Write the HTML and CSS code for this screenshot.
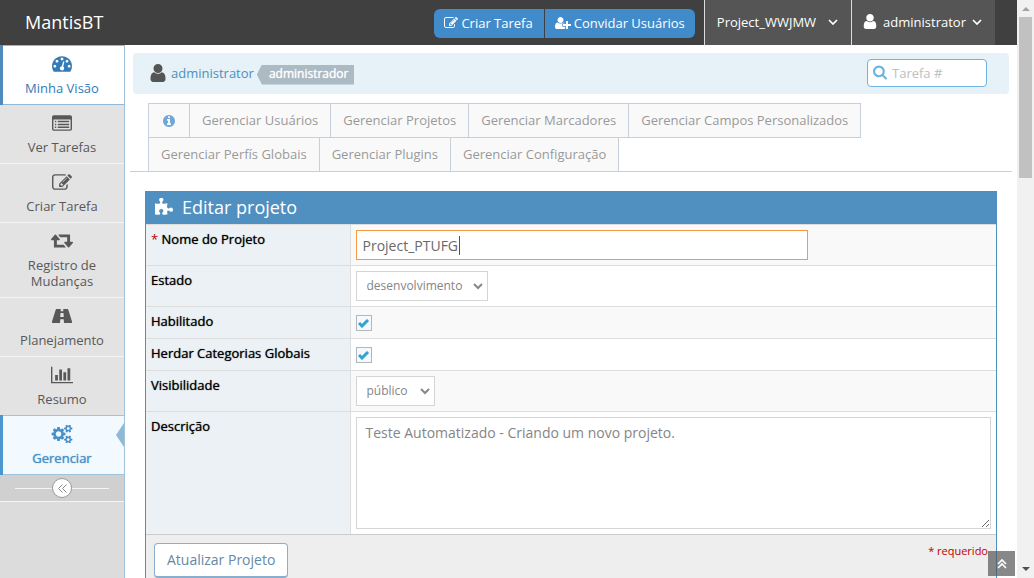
FILE: index.html
```html
<!DOCTYPE html>
<html lang="pt-BR">
<head>
<meta charset="utf-8">
<title>Editar projeto - MantisBT</title>
<link rel="stylesheet" href="styles.css">
</head>
<body>
<svg class="sprite" aria-hidden="true">
  <symbol id="user" viewBox="192 128 1408 1536"><path d="M1536 1399q0 109-62.5 187t-150.5 78h-854q-88 0-150.5-78t-62.5-187q0-85 8.5-160.5t31.5-152 58.5-131 94-89 134.5-34.5q131 128 313 128t313-128q76 0 134.5 34.5t94 89 58.5 131 31.5 152 8.5 160.5zm-256-887q0 159-112.5 271.5t-271.5 112.5-271.5-112.5-112.5-271.5 112.5-271.5 271.5-112.5 271.5 112.5 112.5 271.5z"/></symbol>
  <symbol id="edit" viewBox="0 128 1792 1408"><path d="M888 1184l116-116-152-152-116 116v56h96v96h56zm440-720q-16-16-33 1l-350 350q-17 17-1 33t33-1l350-350q17-17 1-33zm80 594v190q0 119-84.500 203.500t-203.500 84.500h-832q-119 0-203.500-84.500t-84.500-203.500v-832q0-119 84.500-203.500t203.500-84.500h832q63 0 117 25 15 7 18 23 3 17-9 29l-49 49q-14 14-32 8-23-6-45-6h-832q-66 0-113 47t-47 113v832q0 66 47 113t113 47h832q66 0 113-47t47-113v-126q0-13 9-22l64-64q15-15 35-7t20 29zm-96-738l288 288-672 672h-288v-288zm444 132l-92 92-288-288 92-92q28-28 68-28t68 28l152 152q28 28 28 68t-28 68z"/></symbol>
  <symbol id="user-plus" viewBox="0 128 2048 1536"><path d="M704 896q-159 0-271.5-112.5t-112.5-271.5 112.5-271.5 271.5-112.5 271.5 112.5 112.5 271.5-112.5 271.5-271.5 112.5zm960 128h352q13 0 22.5 9.5t9.5 22.5v192q0 13-9.5 22.5t-22.5 9.5h-352v352q0 13-9.5 22.5t-22.5 9.5h-192q-13 0-22.5-9.5t-9.5-22.5v-352h-352q-13 0-22.5-9.5t-9.5-22.5v-192q0-13 9.5-22.5t22.5-9.5h352v-352q0-13 9.5-22.5t22.5-9.5h192q13 0 22.5 9.5t9.5 22.5v352zm-736 224q0 52 38 90t90 38h256v238q-68 50-171 50h-874q-121 0-194-69t-73-190q0-53 3.5-103.5t14-109 26.5-108.5 43-97.5 62-81 85.5-53.5 111.5-20q19 0 39 17 79 61 154.5 91.5t164.5 30.5 164.5-30.5 154.5-91.5q20-17 39-17 132 0 217 96h-223q-52 0-90 38t-38 90v192z"/></symbol>
  <symbol id="search" viewBox="64 128 1664 1664"><path d="M1216 832q0-185-131.5-316.5t-316.5-131.5-316.5 131.5-131.5 316.5 131.5 316.5 316.5 131.5 316.5-131.5 131.5-316.5zm512 832q0 52-38 90t-90 38q-54 0-90-38l-343-342q-179 124-399 124-143 0-273.5-55.5t-225-150-150-225-55.5-273.5 55.5-273.5 150-225 225-150 273.5-55.5 273.5 55.5 225 150 150 225 55.5 273.5q0 220-124 399l343 343q37 37 37 90z"/></symbol>
  <symbol id="info" viewBox="128 128 1536 1536"><path d="M1152 1376v-160q0-14-9-23t-23-9h-96v-512q0-14-9-23t-23-9h-320q-14 0-23 9t-9 23v160q0 14 9 23t23 9h96v320h-96q-14 0-23 9t-9 23v160q0 14 9 23t23 9h448q14 0 23-9t9-23zm-128-896v-160q0-14-9-23t-23-9h-192q-14 0-23 9t-9 23v160q0 14 9 23t23 9h192q14 0 23-9t9-23zm640 416q0 209-103 385.5t-279.5 279.5-385.5 103-385.5-103-279.5-279.5-103-385.5 103-385.5 279.5-279.5 385.5-103 385.5 103 279.5 279.5 103 385.5z"/></symbol>
  <symbol id="gauge" viewBox="0 256 1792 1408"><path d="M384 1152q0-53-37.5-90.5t-90.5-37.5-90.5 37.5-37.5 90.5 37.5 90.5 90.5 37.5 90.5-37.5 37.5-90.5zm192-448q0-53-37.5-90.5t-90.5-37.5-90.5 37.5-37.5 90.5 37.5 90.5 90.5 37.5 90.5-37.5 37.5-90.5zm428 481l101-382q6-26-7.5-48.5t-38.5-29.5-48 6.5-30 39.5l-101 382q-60 5-107 43.5t-63 98.5q-20 77 20 146t117 89 146-20 89-117q16-60-6-117t-72-91zm660-33q0-53-37.5-90.5t-90.5-37.5-90.5 37.5-37.5 90.5 37.5 90.5 90.5 37.5 90.5-37.5 37.5-90.5zm-640-640q0-53-37.5-90.5t-90.5-37.5-90.5 37.5-37.5 90.5 37.5 90.5 90.5 37.5 90.5-37.5 37.5-90.5zm448 192q0-53-37.5-90.5t-90.5-37.5-90.5 37.5-37.5 90.5 37.5 90.5 90.5 37.5 90.5-37.5 37.5-90.5zm320 448q0 261-141 483-19 29-54 29h-1402q-35 0-54-29-141-221-141-483 0-182 71-348t191-286 286-191 348-71 348 71 286 191 191 286 71 348z"/></symbol>
  <symbol id="list" viewBox="0 128 1792 1408"><path fill-rule="evenodd" d="M160 128H1632Q1792 128 1792 288V1376Q1792 1536 1632 1536H160Q0 1536 0 1376V288Q0 128 160 128zM160 512Q128 512 128 544V1376Q128 1408 160 1408H1632Q1664 1408 1664 1376V544Q1664 512 1632 512zM256 640H384V768H256zM256 896H384V1024H256zM256 1152H384V1280H256zM512 640H1536V768H512zM512 896H1536V1024H512zM512 1152H1536V1280H512z"/></symbol>
  <symbol id="retweet" viewBox="0 384 1920 1152"><path d="M1280 1504q0 13-9.500 22.500t-22.500 9.500h-960q-8 0-13.500-2t-9-7-5.500-8-3-11.500-1-11.500v-600h-192q-26 0-45-19t-19-45q0-24 15-41l320-384q19-22 49-22t49 22l320 384q15 17 15 41 0 26-19 45t-45 19h-192v384h576q16 0 25 11l160 192q7 10 7 21zm640-416q0 24-15 41l-320 384q-20 23-49 23t-49-23l-320-384q-15-17-15-41 0-26 19-45t45-19h192v-384h-576q-16 0-25-12l-160-192q-7-9-7-20 0-13 9.500-22.500t22.500-9.500h960q8 0 13.500 2t9 7 5.500 8 3 11.500 1 11.500v600h192q26 0 45 19t19 45z"/></symbol>
  <symbol id="road" viewBox="0 0 20 14"><path fill-rule="evenodd" d="M4.600 0H8.800L8.600 2.200H11.400L11.200 0H15.400Q16 0 16.300.7L20 12.600Q20.200 14 19.300 14H12L11.700 10.200H8.300L8 14H.7Q-.2 14 0 12.600L3.700.7Q4 0 4.600 0zM8.500 4L8.200 8H11.800L11.500 4z"/></symbol>
  <symbol id="chart" viewBox="0 128 2048 1536"><path d="M640 896v512h-256v-512h256zm384-512v1024h-256v-1024h256zm1024 1152v128h-2048v-1536h128v1408h1920zm-640-896v768h-256v-768h256zm384-384v1152h-256v-1152h256z"/></symbol>
  <symbol id="cogs" viewBox="0 64 1920 1664"><path d="M896 896q0-106-75-181t-181-75-181 75-75 181 75 181 181 75 181-75 75-181zm768 512q0-52-38-90t-90-38-90 38-38 90q0 53 37.5 90.5t90.5 37.5 90.5-37.5 37.5-90.5zm0-1024q0-52-38-90t-90-38-90 38-38 90q0 53 37.5 90.5t90.5 37.5 90.5-37.5 37.5-90.5zm-384 421v185q0 10-7 19.500t-16 10.500l-155 24q-11 35-32 76 34 48 90 115 7 11 7 20 0 12-7 19-23 30-82.500 89.500t-78.500 59.500q-11 0-21-7l-115-90q-37 19-77 31-11 108-23 155-7 24-30 24h-186q-11 0-20-7.500t-10-17.500l-23-153q-34-10-75-31l-118 89q-7 7-20 7-11 0-21-8-144-133-144-160 0-9 7-19 10-14 41-53t47-61q-23-44-35-82l-152-24q-10-1-17-9.500t-7-19.500v-185q0-10 7-19.500t16-10.500l155-24q11-35 32-76-34-48-90-115-7-11-7-20 0-12 7-20 22-30 82-89t79-59q11 0 21 7l115 90q34-18 77-32 11-108 23-154 7-24 30-24h186q11 0 20 7.500t10 17.500l23 153q34 10 75 31l118-89q8-7 20-7 11 0 21 8 144 133 144 160 0 8-7 19-12 16-42 54t-45 60q23 48 34 82l152 23q10 2 17 10.500t7 19.500zm640 533v140q0 16-149 31-12 27-30 52 51 113 51 138 0 4-4 7-122 71-124 71-8 0-46-47t-52-68q-20 2-30 2t-30-2q-14 21-52 68t-46 47q-2 0-124-71-4-3-4-7 0-25 51-138-18-25-30-52-149-15-149-31v-140q0-16 149-31 13-29 30-52-51-113-51-138 0-4 4-7 4-2 35-20t59-34 30-16q8 0 46 46.500t52 67.500q20-2 30-2t30 2q51-71 92-112l6-2q4 0 124 70 4 3 4 7 0 25-51 138 17 23 30 52 149 15 149 31zm0-1024v140q0 16-149 31-12 27-30 52 51 113 51 138 0 4-4 7-122 71-124 71-8 0-46-47t-52-68q-20 2-30 2t-30-2q-14 21-52 68t-46 47q-2 0-124-71-4-3-4-7 0-25 51-138-18-25-30-52-149-15-149-31v-140q0-16 149-31 13-29 30-52-51-113-51-138 0-4 4-7 4-2 35-20t59-34 30-16q8 0 46 46.500t52 67.500q20-2 30-2t30 2q51-71 92-112l6-2q4 0 124 70 4 3 4 7 0 25-51 138 17 23 30 52 149 15 149 31z"/></symbol>
  <symbol id="puzzle" viewBox="91 0 1664 1664"><path d="M1755 1082q0 81-44.500 135t-123.500 54q-41 0-77.500-17.500t-59-38-56.500-38-71-17.500q-110 0-110 124 0 39 16 115t15 115v5q-22 0-33 1-34 3-97.500 11.500t-115.500 13.500-98 5q-61 0-103-26.500t-42-83.500q0-37 17.500-71t38-56.500 38-59 17.500-77.500q0-79-54-123.500t-135-44.500q-84 0-143 45.500t-59 127.500q0 43 15 83t33.500 64.500 33.500 53 15 50.500q0 45-46 89-37 35-117 35-95 0-245-24-9-2-27.500-4t-27.500-4l-13-2q-1 0-3-1-2 0-2-1v-1024q2 1 17.500 3.500t34 5 21.500 3.500q150 24 245 24 80 0 117-35 46-44 46-89 0-22-15-50.500t-33.500-53-33.500-64.500-15-83q0-82 59-127.500t144-45.500q80 0 134 44.500t54 123.500q0 41-17.500 77.500t-38 59-38 56.500-17.500 71q0 57 42 83.500t103 26.500q64 0 180-15t163-17v2q-1 2-3.500 17.500t-5 34-3.500 21.500q-24 150-24 245 0 80 35 117 44 46 89 46 22 0 50.500-15t53-33.500 64.500-33.500 83-15q82 0 127.500 59t45.500 143z"/></symbol>
  <symbol id="angle" viewBox="0 0 10 6"><path d="M1 1l4 4 4-4" fill="none" stroke="currentColor" stroke-width="1.700"/></symbol>
  <symbol id="double-left" viewBox="0 0 9 9"><path d="M4.500.5l-4 4 4 4M8.500.5l-4 4 4 4" fill="none" stroke="currentColor"/></symbol>
  <symbol id="double-up" viewBox="0 0 10 10"><path d="M1 5l4-4 4 4M1 9l4-4 4 4" fill="none" stroke="currentColor" stroke-width="1.700"/></symbol>
</svg>
<div class="window">
<div class="page">
  <header class="navbar">
    <a class="brand" href="#">MantisBT</a>
    <div class="nav-buttons">
      <a class="nav-button" href="#"><svg class="i14"><use href="#edit"/></svg>Criar Tarefa</a>
      <a class="nav-button" href="#"><svg class="i16"><use href="#user-plus"/></svg>Convidar Usuários</a>
    </div>
    <button class="nav-menu project-menu" type="button">Project_WWJMW<svg class="angle"><use href="#angle"/></svg></button>
    <button class="nav-menu user-menu" type="button"><svg class="i14"><use href="#user"/></svg>administrator<svg class="angle"><use href="#angle"/></svg></button>
  </header>
  <div class="body">
    <nav class="sidebar">
      <a class="side-item hovered" href="#"><svg class="side-icon"><use href="#gauge"/></svg><span>Minha Visão</span></a>
      <a class="side-item" href="#"><svg class="side-icon"><use href="#list"/></svg><span>Ver Tarefas</span></a>
      <a class="side-item" href="#"><svg class="side-icon"><use href="#edit"/></svg><span>Criar Tarefa</span></a>
      <a class="side-item" href="#"><svg class="side-icon wide"><use href="#retweet"/></svg><span>Registro de Mudanças</span></a>
      <a class="side-item" href="#"><svg class="side-icon"><use href="#road"/></svg><span>Planejamento</span></a>
      <a class="side-item" href="#"><svg class="side-icon wide"><use href="#chart"/></svg><span>Resumo</span></a>
      <a class="side-item active" href="#"><svg class="side-icon wide"><use href="#cogs"/></svg><span>Gerenciar</span></a>
      <div class="side-toggle"><button type="button" aria-label="Recolher menu"><svg><use href="#double-left"/></svg></button></div>
    </nav>
    <main class="content">
      <div class="crumbs">
        <svg class="crumb-icon"><use href="#user"/></svg>
        <a href="#">administrator</a>
        <span class="role">administrador</span>
        <label class="search"><svg class="i14"><use href="#search"/></svg><input type="text" placeholder="Tarefa #" aria-label="Tarefa #"></label>
      </div>
      <ul class="tabs">
        <li><a href="#" aria-label="Informações"><svg class="i12"><use href="#info"/></svg></a></li>
        <li><a href="#">Gerenciar Usuários</a></li>
        <li><a href="#">Gerenciar Projetos</a></li>
        <li><a href="#">Gerenciar Marcadores</a></li>
        <li><a href="#">Gerenciar Campos Personalizados</a></li>
        <li><a href="#">Gerenciar Perfís Globais</a></li>
        <li><a href="#">Gerenciar Plugins</a></li>
        <li><a href="#">Gerenciar Configuração</a></li>
      </ul>
      <form class="widget">
        <h4><svg><use href="#puzzle"/></svg>Editar projeto</h4>
        <table>
          <tr><th><span class="required">*</span> <label for="name">Nome do Projeto</label></th><td><div class="name-field"><input class="name" id="name" type="text" value="Project_PTUFG"></div></td></tr>
          <tr><th><label for="status">Estado</label></th><td><select class="status" id="status"><option>desenvolvimento</option></select></td></tr>
          <tr><th><label for="enabled">Habilitado</label></th><td><input id="enabled" type="checkbox" checked></td></tr>
          <tr><th><label for="inherit">Herdar Categorias Globais</label></th><td><input id="inherit" type="checkbox" checked></td></tr>
          <tr><th><label for="visibility">Visibilidade</label></th><td><select class="visibility" id="visibility"><option>público</option></select></td></tr>
          <tr><th><label for="description">Descrição</label></th><td><textarea id="description">Teste Automatizado - Criando um novo projeto.</textarea></td></tr>
        </table>
        <div class="form-footer">
          <button type="submit">Atualizar Projeto</button>
          <span class="required">* requerido</span>
        </div>
      </form>
    </main>
  </div>
  <a class="scroll-up" href="#" aria-label="Topo"><svg><use href="#double-up"/></svg></a>
</div>
<div class="scrollbar" aria-hidden="true"><i class="arrow up"></i><i class="thumb"></i><i class="arrow down"></i></div>
</div>
</body>
</html>
```
FILE: styles.css
```css
* { box-sizing: border-box; }
body {
  margin: 0;
  font: 13px/18px "Open Sans", sans-serif;
  color: #393939;
  background: #fff;
}
a { color: inherit; text-decoration: none; }
button, input, select, textarea { font: inherit; margin: 0; }
svg { fill: currentColor; flex: none; display: block; }
.sprite { display: none; }
.i12 { width: 12px; height: 12px; }
.i14 { width: 14px; height: 15px; }
.i16 { width: 16px; height: 14px; }
.angle { width: 10px; height: 6px; }

.window { display: flex; height: 100vh; overflow: hidden; }
.page { position: relative; flex: 1; min-width: 0; display: flex; flex-direction: column; overflow: hidden; }

.navbar {
  display: flex;
  align-items: center;
  flex: none;
  height: 45px;
  padding-right: 22px;
  background: #404040;
  color: #fff;
}
.brand { margin-right: auto; padding: 0 0 2px 25px; font-size: 18px; }
.nav-buttons { display: flex; gap: 1px; margin-right: 9px; padding-top: 2px; }
.nav-button {
  display: flex;
  align-items: center;
  gap: 3px;
  height: 29px;
  padding: 0 10px 2px;
  background: #428bca;
}
.nav-button:first-child { padding-right: 11px; border-radius: 6px 0 0 6px; }
.nav-button:last-child { border-radius: 0 6px 6px 0; }
.nav-menu {
  display: flex;
  align-items: center;
  height: 45px;
  padding: 0 13px 2px 12px;
  border: 0;
  border-left: 1px solid #ddd;
  background: #555;
  color: #fff;
}
.project-menu { gap: 12px; }
.user-menu { gap: 6px; padding-left: 11px; }

.body { display: flex; flex: 1; min-height: 0; }
.sidebar { flex: none; width: 125px; border-right: 1px solid #a0c4dc; background: #dcdcdc; }
.side-item {
  display: flex;
  flex-direction: column;
  align-items: center;
  gap: 7px;
  position: relative;
  padding: 9px 14px 8px;
  border-bottom: 1px solid #f4f4f4;
  background: #e3e3e3;
  color: #585858;
  line-height: 16px;
  text-align: center;
}
.side-icon { width: 20px; height: 18px; }
.side-icon.wide { width: 22px; }
.side-item.hovered {
  border-top: 1px solid #8fb9d5;
  border-bottom-color: #8fb9d5;
  background: #fff;
  color: #337ab7;
}
.side-item.hovered::before, .side-item.active::before {
  content: "";
  position: absolute;
  inset: -1px auto -1px 0;
  width: 3px;
  background: #4f8cbd;
}
.side-item.active {
  border-top: 1px solid #a0c4dc;
  border-bottom-color: #a0c4dc;
  background: #f2f9ff;
  color: #4a90c6;
  margin-top: -1px;
}
.side-item.active span { text-shadow: 0 0 1px #4a90c6; }
.side-item.active::before { background: #4b96cd; }
.side-item.active::after {
  content: "";
  position: absolute;
  right: 0;
  top: 7px;
  border: solid transparent;
  border-width: 12px 8px 12px 0;
  border-right-color: #8fb9d5;
}
.side-toggle {
  display: flex;
  align-items: center;
  justify-content: center;
  height: 27px;
  padding: 0 15px;
  border-bottom: 1px solid #f4f4f4;
  background: #d0d0d0;
}
.side-toggle::before, .side-toggle::after { content: ""; flex: 1; height: 1px; background: #f4f4f4; }
.side-toggle button {
  display: flex;
  align-items: center;
  justify-content: center;
  width: 20px;
  height: 20px;
  padding: 0;
  border: 1px solid #999;
  border-radius: 50%;
  background: #fff;
  color: #888;
}
.side-toggle svg { width: 9px; height: 9px; }

.content { flex: 1; min-width: 0; padding: 8px 8px 0; }
.crumbs {
  display: flex;
  align-items: center;
  height: 41px;
  padding: 0 22px 2px 16px;
  border-radius: 4px;
  background: #e6f1f8;
}
.crumb-icon { width: 18px; height: 18px; margin-right: 4px; color: #555; }
.crumbs a { color: #4c8fbd; }
.role {
  height: 20px;
  margin: 4px auto 0 3px;
  padding: 0 6px 0 12px;
  background: #abbac3;
  clip-path: polygon(5px 0, 100% 0, 100% 100%, 5px 100%, 0 50%);
  color: #fff;
  font-size: 12px;
  text-shadow: 0 0 1px #fff;
}
.search {
  display: flex;
  align-items: center;
  gap: 5px;
  width: 120px;
  height: 28px;
  padding: 0 5px;
  border: 1px solid #6fb3e0;
  border-radius: 4px;
  background: #fff;
  color: #6fb3e0;
}
.search input { flex: 1; min-width: 0; padding: 0; border: 0; outline: 0; background: none; }
.search input::placeholder { color: #c0c0c0; }

.tabs {
  display: flex;
  flex-wrap: wrap;
  margin: 9px -3px 0;
  padding: 0 130px 0 18px;
  border-bottom: 1px solid #c5d0dc;
  list-style: none;
}
.tabs li { margin-right: -1px; }
.tabs a {
  display: flex;
  align-items: center;
  height: 35px;
  margin-bottom: -1px;
  padding: 0 12px 2px;
  border: 1px solid #c5d0dc;
  background: #f9f9f9;
  color: #999;
}
.tabs li:first-child a { padding: 0 14px; color: #6fa8d6; }

.widget { margin: 19px 12px 0; border: 1px solid #4f90c1; border-top: 0; border-bottom: 0; }
.widget h4 {
  display: flex;
  align-items: center;
  gap: 9px;
  height: 33px;
  margin: 0;
  padding: 0 9px 2px;
  background: #4f90c1;
  color: #fff;
  font-size: 18px;
  font-weight: 400;
}
.widget h4 svg { width: 18px; height: 18px; }
.widget table { width: 100%; border-collapse: collapse; table-layout: fixed; }
.widget th, .widget td { padding: 5px; border-top: 1px solid #ddd; vertical-align: top; text-align: left; }
.widget th { width: 204px; background: #ecf1f5; color: #000; font-weight: 400; text-shadow: 0 0 1px #333; }
.widget td { border-left: 1px solid #ddd; }
.widget tr:nth-child(odd) td { background: #f9f9f9; }
.required { color: #b00; text-shadow: none; }
.widget td > *, .name { display: block; outline: 0; border-radius: 0; }
.name-field { position: relative; }
.name-field::after {
  content: "";
  position: absolute;
  top: 6px;
  left: 103px;
  width: 1px;
  height: 19px;
  background: #555;
}
.name {
  width: 452px;
  height: 30px;
  padding: 0 6px;
  border: 1px solid #f59942;
  background: #fff;
  color: #696969;
  font-size: 14px;
}
.widget select {
  appearance: none;
  height: 30px;
  padding: 0 10px;
  border: 1px solid #d5d5d5;
  background: #fff url("data:image/svg+xml,%3Csvg xmlns='http://www.w3.org/2000/svg' width='10' height='7'%3E%3Cpath d='M1 1l4 4 4-4' fill='none' stroke='%23888' stroke-width='2'/%3E%3C/svg%3E") no-repeat right 4px center;
  color: #858585;
  font-size: 12px;
}
.status { width: 132px; }
.visibility { width: 79px; }
.widget input[type="checkbox"] {
  appearance: none;
  width: 16px;
  height: 16px;
  margin: 3px 0 2px;
  border: 1px solid #adb8c0;
  background: #f5f8fc;
}
.widget input[type="checkbox"]:checked {
  background: #f5f8fc url("data:image/svg+xml,%3Csvg xmlns='http://www.w3.org/2000/svg' width='12' height='9'%3E%3Cpath d='M1 4l3 3 6-6' fill='none' stroke='%2332a3ce' stroke-width='3'/%3E%3C/svg%3E") no-repeat center;
}
.widget textarea {
  width: 100%;
  height: 112px;
  padding: 6px 9px;
  border: 1px solid #d5d5d5;
  background: #fff;
  color: #858585;
  font-size: 14px;
}
.form-footer {
  display: flex;
  justify-content: space-between;
  height: 80px;
  padding: 8px 8px 0;
  border-top: 1px solid #ccc;
  background: #eee;
}
.form-footer button {
  height: 35px;
  padding: 0 12px;
  border: 1px solid #8aafce;
  border-bottom-width: 2px;
  border-radius: 4px;
  background: #fff;
  color: #6688a6;
  font-size: 14px;
}
.form-footer .required { font-size: 11px; line-height: 16px; }

.scroll-up {
  position: absolute;
  right: 2px;
  bottom: 2px;
  display: flex;
  align-items: center;
  justify-content: center;
  width: 27px;
  height: 25px;
  background: rgba(85, 85, 85, 0.7);
  color: #fff;
}
.scroll-up svg { width: 10px; height: 10px; }

.scrollbar {
  display: flex;
  flex-direction: column;
  align-items: center;
  flex: none;
  width: 17px;
  background: #f1f1f1;
}
.thumb { width: 13px; height: 161px; margin-top: 6px; background: #c1c1c1; }
.arrow { border: 4px solid transparent; }
.up { margin-top: 3px; border-bottom-color: #a3a3a3; }
.down { margin-top: auto; margin-bottom: 3px; border-top-color: #505050; }
```
